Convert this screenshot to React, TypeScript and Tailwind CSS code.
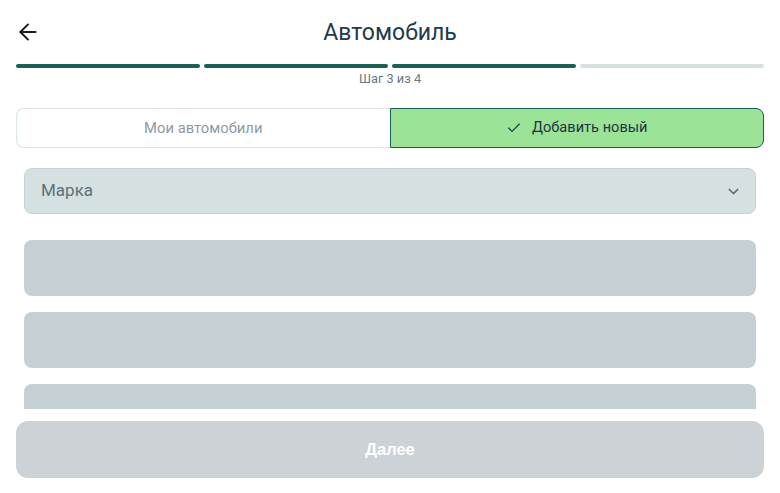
import React from "react";
import { ArrowLeft, Check, ChevronDown } from "lucide-react";

export default function App() {
  return (
    <div className="w-[780px] h-[493px] flex flex-col bg-white font-['Roboto',sans-serif] overflow-hidden">
      <div className="h-[64px] shrink-0 grid grid-cols-[60px_1fr_60px] items-center px-4">
        <div className="flex items-center">
          <ArrowLeft size={26} strokeWidth={1.8} className="text-[#1b1b1b] -ml-[1px]" />
        </div>
        <div className="text-center text-[23px] text-[#223a49] leading-none">Автомобиль</div>
        <div />
      </div>
      <div className="shrink-0 px-4 flex gap-1">
        <div className="flex-1 h-1 rounded-full bg-[#1b5f56]" />
        <div className="flex-1 h-1 rounded-full bg-[#1b5f56]" />
        <div className="flex-1 h-1 rounded-full bg-[#1b5f56]" />
        <div className="flex-1 h-1 rounded-full bg-[#d6e0e0]" />
      </div>
      <div className="shrink-0 mt-[3px] text-center text-[12.8px] leading-4 text-[#6a7a83]">Шаг 3 из 4</div>
      <div className="shrink-0 mt-[21px] mx-4 h-10 flex">
        <div className="flex-1 flex items-center justify-center rounded-l-lg border border-r-0 border-[#dbe4e8] text-[14.8px] text-[#8e9aa1]">
          Мои автомобили
        </div>
        <div className="flex-1 flex items-center justify-center gap-[10px] rounded-r-lg border border-[#1b5f56] bg-[#9be397] text-[14.6px] text-[#1e3443]">
          <Check size={16} strokeWidth={1.7} />
          Добавить новый
        </div>
      </div>
      <div className="flex-1 min-h-0 overflow-hidden px-6 pt-5 flex flex-col">
        <div className="shrink-0 h-[46px] rounded-lg border border-[#c5d2d4] bg-[#d5e1e1] flex items-center justify-between pl-4 pr-[13px]">
          <span className="text-[17px] text-[#5f6f77]">Марка</span>
          <ChevronDown size={17} strokeWidth={2} className="text-[#5f6f77]" />
        </div>
        <div className="shrink-0 mt-[26px] h-14 rounded-lg bg-[#c5d0d5]" />
        <div className="shrink-0 mt-4 h-14 rounded-lg bg-[#c5d0d5]" />
        <div className="shrink-0 mt-4 h-14 rounded-lg bg-[#c5d0d5]" />
      </div>
      <div className="shrink-0 px-4 pt-3 pb-[15px]">
        <div className="h-[57px] rounded-xl bg-[#ccd2d6] flex items-center justify-center font-['Liberation_Sans',sans-serif] font-bold text-[16.5px] text-white">
          Далее
        </div>
      </div>
    </div>
  );
}
